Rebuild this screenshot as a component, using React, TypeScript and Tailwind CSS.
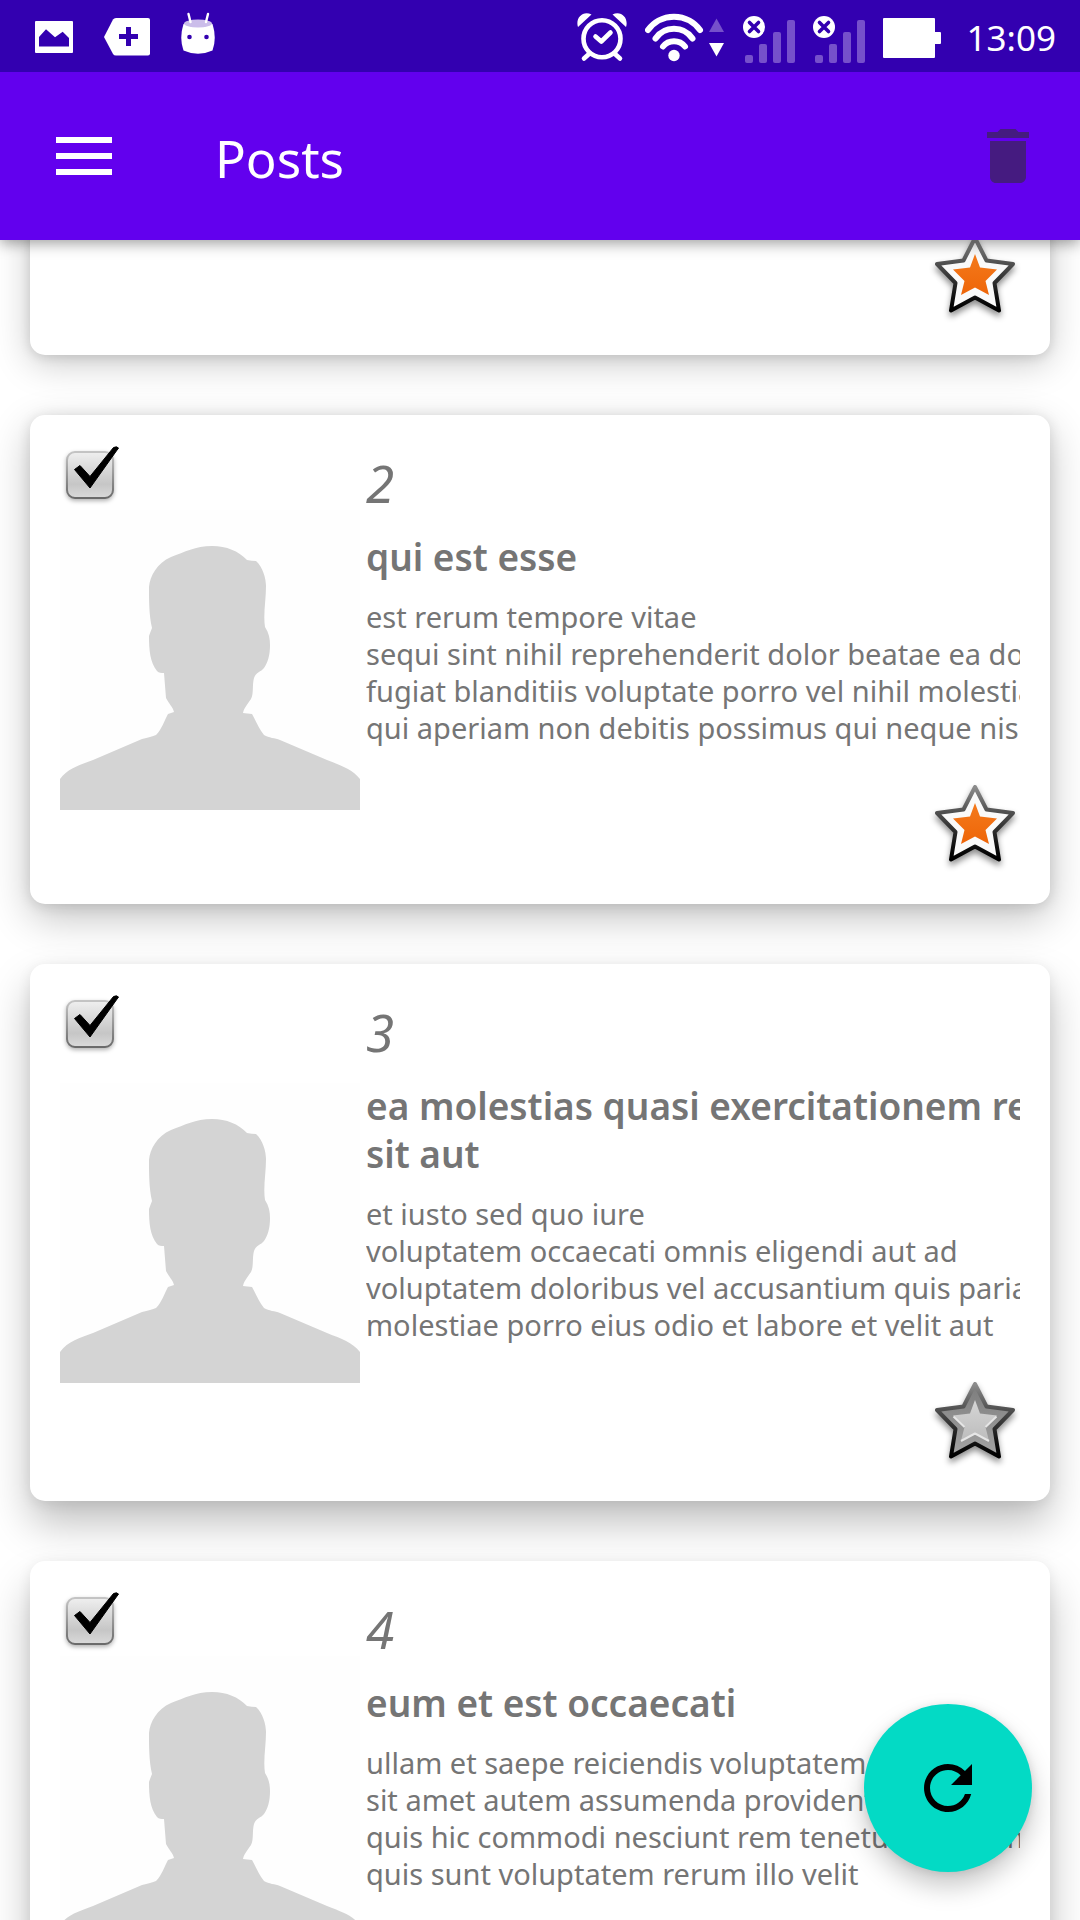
import { useId, type ReactNode } from "react";
import { MdDelete, MdRefresh } from "react-icons/md";

type Post = { id: number; title: string[]; body: string[]; starred: boolean; shadow: string };

const posts: Post[] = [
  {
    id: 2,
    title: ["qui est esse"],
    body: [
      "est rerum tempore vitae",
      "sequi sint nihil reprehenderit dolor beatae ea dolores neque",
      "fugiat blanditiis voluptate porro vel nihil molestiae ut reiciendis",
      "qui aperiam non debitis possimus qui neque nisi nulla",
    ],
    starred: true,
    shadow: "shadow-[0_14px_40px_rgba(0,0,0,0.24),0_2px_14px_rgba(0,0,0,0.12)]",
  },
  {
    id: 3,
    title: ["ea molestias quasi exercitationem repellat qui ipsa", "sit aut"],
    body: [
      "et iusto sed quo iure",
      "voluptatem occaecati omnis eligendi aut ad",
      "voluptatem doloribus vel accusantium quis pariatur",
      "molestiae porro eius odio et labore et velit aut",
    ],
    starred: false,
    shadow: "shadow-[0_22px_42px_rgba(0,0,0,0.25),0_3px_14px_rgba(0,0,0,0.08)]",
  },
  {
    id: 4,
    title: ["eum et est occaecati"],
    body: [
      "ullam et saepe reiciendis voluptatem adipisci",
      "sit amet autem assumenda provident rerum culpa",
      "quis hic commodi nesciunt rem tenetur doloremque ipsam iure",
      "quis sunt voluptatem rerum illo velit",
    ],
    starred: true,
    shadow: "shadow-[0_26px_42px_rgba(0,0,0,0.25),0_3px_14px_rgba(0,0,0,0.08)]",
  },
];

function StatusIcon({ width, label, children }: { width: number; label: string; children: ReactNode }) {
  return (
    <svg width={width} height={54} viewBox={`0 -1 ${width} 54`} role="img" aria-label={label} className="shrink-0">
      {children}
    </svg>
  );
}

function Signal() {
  return (
    <StatusIcon width={52} label="No signal">
      <g fill="#7650cb">
        <rect x="2" y="45" width="8" height="8" rx="2" />
        <rect x="16" y="34" width="8" height="19" rx="2" />
        <rect x="30" y="22" width="8" height="31" rx="2" />
        <rect x="44" y="10" width="8" height="43" rx="2" />
      </g>
      <circle cx="11" cy="17" r="11" fill="#fff" />
      <path d="M6.5 12.5L15.5 21.5M15.5 12.5L6.5 21.5" stroke="#3300b0" strokeWidth="3.6" strokeLinecap="round" />
    </StatusIcon>
  );
}

function StatusBar() {
  return (
    <div className="flex h-[72px] items-center justify-between bg-[#3300b0] pr-6 pl-[35px]">
      <div className="flex items-center gap-[31px]">
        <StatusIcon width={38} label="Image">
          <rect x="0" y="11" width="38" height="32" rx="1" fill="#fff" />
          <path d="M4 36.5V27L11 19.3L20 27.3L27.7 21.7L34 28V36.5Z" fill="#3300b0" />
        </StatusIcon>
        <StatusIcon width={46} label="New item">
          <path d="M0 27L9 9.5Q10 8 12 8H44Q46 8 46 10V43.5Q46 45.5 44 45.5H12Q10 45.5 9 44Z" fill="#fff" />
          <path d="M24.5 17V36M15 26.5H34" stroke="#3300b0" strokeWidth="5" />
        </StatusIcon>
        <StatusIcon width={34} label="Android">
          <path d="M2.5 14Q17 8 31.5 14Q36 28 31.5 40.5Q17 47 2.5 40.5Q-2 28 2.5 14Z" fill="#fff" />
          <ellipse cx="17" cy="13.5" rx="14" ry="4" fill="#cbbdea" />
          <path d="M7.5 4L9.5 12M27 4L25 12" stroke="#fff" strokeWidth="2.4" strokeLinecap="round" />
          <circle cx="8.5" cy="27" r="2.3" fill="#3300b0" />
          <circle cx="25.5" cy="27" r="2.3" fill="#3300b0" />
        </StatusIcon>
      </div>
      <div className="flex items-center gap-[18px]">
        <StatusIcon width={50} label="Alarm">
          <g fill="none" stroke="#fff" strokeWidth="4.6" strokeLinecap="round" strokeLinejoin="round">
            <circle cx="25" cy="28.7" r="18.5" />
            <path d="M18.5 26.5L24.3 31.5L33.5 22.5M12 44L7 48.5M38 44L43 48.5" />
          </g>
          <path d="M1 17C-2 8 6 0 14.5 4.5ZM49 17C52 8 44 0 35.5 4.5Z" fill="#fff" />
        </StatusIcon>
        <StatusIcon width={80} label="Wi-Fi">
          <g fill="none" stroke="#fff" strokeWidth="6" strokeLinecap="round">
            <path d="M3 20A32 32 0 0 1 55 20" />
            <path d="M10.5 28.5A22.5 22.5 0 0 1 47.5 28.5" />
            <path d="M18 36.5A14 14 0 0 1 40 36.5" />
          </g>
          <circle cx="29" cy="45.5" r="5.7" fill="#fff" />
          <path d="M71.5 8.5L79 22H64Z" fill="#7650cb" />
          <path d="M71.5 46.5L79 33H64Z" fill="#fff" />
        </StatusIcon>
        <Signal />
        <Signal />
        <StatusIcon width={58} label="Battery full">
          <rect x="0" y="8" width="52" height="40" rx="1" fill="#fff" />
          <rect x="51" y="22" width="7" height="12" rx="1" fill="#fff" />
        </StatusIcon>
        <time className="ml-2 pt-1 text-[35px] leading-[48px] text-white">13:09</time>
      </div>
    </div>
  );
}

function CheckBox({ id }: { id: number }) {
  const grad = useId();
  return (
    <label className="relative block h-[60px] w-[60px]">
      <svg viewBox="0 0 60 60" className="h-full w-full overflow-visible" aria-hidden="true">
        <defs>
          <linearGradient id={`${grad}f`} x1="0" y1="0" x2="0" y2="1">
            <stop offset="0" stopColor="#efefef" />
            <stop offset="0.7" stopColor="#c6c6c6" />
            <stop offset="1" stopColor="#dadada" />
          </linearGradient>
          <linearGradient id={`${grad}s`} x1="0" y1="0" x2="0" y2="1">
            <stop offset="0" stopColor="#c4c4c4" />
            <stop offset="1" stopColor="#6a6a6a" />
          </linearGradient>
        </defs>
        <rect
          x="7"
          y="7"
          width="46"
          height="46"
          rx="8"
          fill={`url(#${grad}f)`}
          stroke={`url(#${grad}s)`}
          strokeWidth="2"
          className="drop-shadow-[0_2px_2px_rgba(0,0,0,0.3)]"
        />
        <path
          d="M14.5 24.500L20 20.500L30 31.500L53.500 2.500Q57 1 58.500 3L30 43Z"
          fill="#000"
          stroke="#000"
          strokeLinejoin="round"
        />
      </svg>
      <input
        type="checkbox"
        defaultChecked
        aria-label={`Select post ${id}`}
        className="absolute inset-0 h-full w-full cursor-pointer appearance-none"
      />
    </label>
  );
}

const outerStar = "M45 3L56.5 25.5L83 29L64.5 48L69 75.5L45 62.5L21 75.5L25.5 48L7 29L33.5 25.5Z";
const innerStar = "M45 19L50 32.5L67 34.5L55.5 46L59 60L45 52.5L31 60L34.5 46L23 34.5L40 32.5Z";

function StarButton({ on, label }: { on: boolean; label: string }) {
  const grad = useId();
  return (
    <button type="button" aria-pressed={on} aria-label={label} className="block h-[90px] w-[90px] cursor-pointer">
      <svg viewBox="0 0 90 90" className="h-full w-full overflow-visible" aria-hidden="true">
        <defs>
          <linearGradient id={`${grad}s`} x1="0" y1="0" x2="0" y2="1">
            <stop offset="0" stopColor="#8c8c8c" />
            <stop offset="0.35" stopColor="#505050" />
            <stop offset="0.8" stopColor="#111" />
            <stop offset="1" stopColor="#000" />
          </linearGradient>
          <linearGradient id={`${grad}g`} x1="0" y1="0" x2="0" y2="1">
            <stop offset="0" stopColor="#7c7c7c" />
            <stop offset="1" stopColor="#a4a4a4" />
          </linearGradient>
          <linearGradient id={`${grad}i`} x1="0" y1="0" x2="0" y2="1">
            <stop offset="0" stopColor={on ? "#f47a1c" : "#d6d6d6"} />
            <stop offset="1" stopColor={on ? "#ee6508" : "#bcbcbc"} />
          </linearGradient>
        </defs>
        <path
          d={outerStar}
          fill={on ? "#fafafa" : `url(#${grad}g)`}
          stroke={`url(#${grad}s)`}
          strokeWidth="4"
          strokeLinejoin="round"
          className="drop-shadow-[0_4px_3px_rgba(0,0,0,0.45)]"
        />
        <path d={innerStar} fill={`url(#${grad}i)`} />
        {!on && (
          <path
            d="M23.500 35.500L34.500 46M66.500 35.500L55.500 46M31 60L45 52.500L59 60"
            fill="none"
            stroke="#e6e6e6"
            strokeWidth="2"
            strokeLinejoin="round"
          />
        )}
      </svg>
    </button>
  );
}

function Avatar() {
  return (
    <svg viewBox="0 0 300 300" role="img" aria-label="Author" className="h-[300px] w-[300px] bg-[#fefefe]">
      <path
        fill="#d4d4d4"
        d="M152 36C167 36 178 41 187 50Q192 51 196 51C203 57 206 69 206 76C206 90 203 105 205 117C209 123 210 129 210 135C210 145 208 152 204 158C201 162 196 162 194 168C192 175 194 183 191 189C187 195 184 198 183 203L192 204C196 211 199 219 204 225C209 228 215 228 220 230L267 250C282 256 292 259 300 269V300H0V269C8 258 20 255 33 250L82 229Q91 227 96 225C102 219 104 211 108 204L114 202C113 197 109 194 106 188L104 163C101 163 99 163 97 161C90 152 89 140 89 126Q90 123 92 118C89 105 89 90 89 77C90 66 97 53 111 47C125 42 135 36 152 36Z"
      />
    </svg>
  );
}

function PostCard({ post }: { post: Post }) {
  return (
    <article className={`relative flex shrink-0 items-center gap-1.5 rounded-[15px] bg-white p-[30px] ${post.shadow}`}>
      <div className="absolute top-[30px] left-[30px]">
        <CheckBox id={post.id} />
      </div>
      <div className="shrink-0">
        <Avatar />
      </div>
      <div className="flex min-w-0 flex-1 flex-col overflow-hidden pt-2 text-[#757575]">
        <p className="text-[51px] leading-[60px] italic">{post.id}</p>
        <h2 className="mt-5 text-[37px] leading-[48px] font-semibold whitespace-nowrap">
          {post.title.map((line) => (
            <span key={line} className="block">
              {line}
            </span>
          ))}
        </h2>
        <p className="mt-[17px] text-[29px] leading-[37px] whitespace-nowrap">
          {post.body.map((line) => (
            <span key={line} className="block">
              {line}
            </span>
          ))}
        </p>
        <div className="mt-[38px] self-end">
          <StarButton on={post.starred} label={`Star post ${post.id}`} />
        </div>
      </div>
    </article>
  );
}

export default function App() {
  return (
    <div className="relative flex h-screen flex-col overflow-hidden bg-white font-['Noto_Sans',sans-serif]">
      <header className="relative z-10 shadow-[0_3px_14px_rgba(0,0,0,0.4)]">
        <StatusBar />
        <div className="flex h-[168px] items-center bg-[#6200ee] pr-9 pl-14">
          <button type="button" aria-label="Open menu" className="cursor-pointer">
            <svg width="56" height="38" viewBox="0 0 56 38" fill="#fff" aria-hidden="true">
              <rect width="56" height="6" />
              <rect y="16" width="56" height="6" />
              <rect y="32" width="56" height="6" />
            </svg>
          </button>
          <h1 className="ml-[103px] flex-1 pt-1 text-[51px] leading-[66px] text-white">Posts</h1>
          <button type="button" aria-label="Delete" className="cursor-pointer text-[#451b80]">
            <MdDelete size={72} />
          </button>
        </div>
      </header>

      <main className="-mt-[35px] flex min-h-0 flex-1 flex-col gap-[60px] overflow-hidden px-[30px]">
        <article className="flex shrink-0 justify-end rounded-[15px] bg-white p-[30px] shadow-[0_8px_36px_rgba(0,0,0,0.22),0_2px_12px_rgba(0,0,0,0.12)]">
          <StarButton on label="Star post 1" />
        </article>
        {posts.map((post) => (
          <PostCard key={post.id} post={post} />
        ))}
      </main>

      <button
        type="button"
        aria-label="Refresh"
        className="absolute right-12 bottom-12 z-20 flex h-[168px] w-[168px] cursor-pointer items-center justify-center rounded-full bg-[#03dac5] text-black shadow-[0_14px_26px_rgba(0,0,0,0.22),0_1px_8px_rgba(0,0,0,0.1)]"
      >
        <MdRefresh size={72} />
      </button>
    </div>
  );
}
